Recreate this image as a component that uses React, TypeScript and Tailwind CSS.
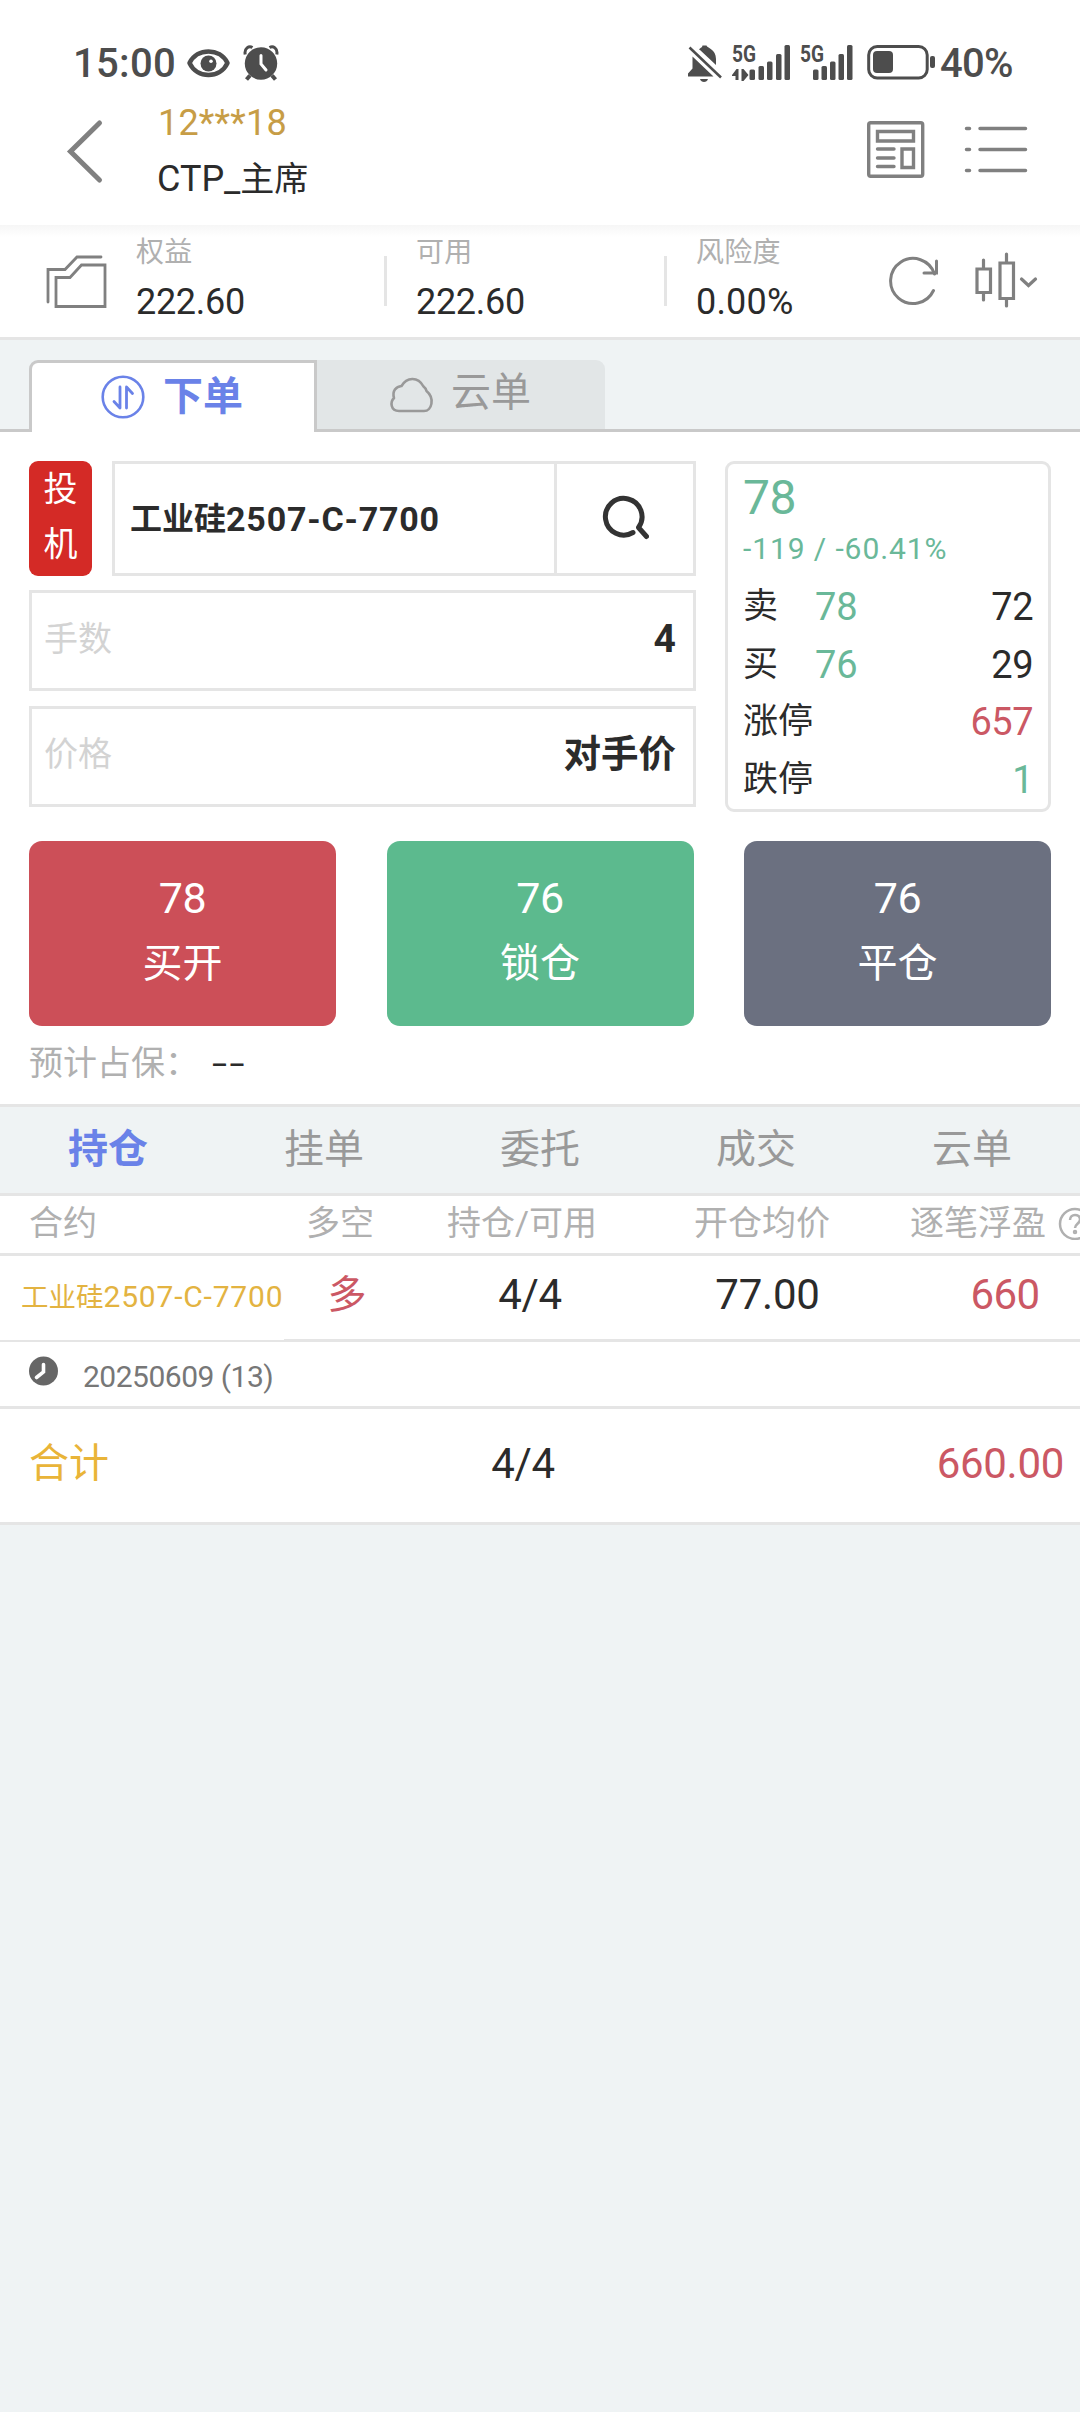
import { useState } from "react";

const orderButtons = [
  { price: "78", label: "买开", color: "bg-[#cc4f58]" },
  { price: "76", label: "锁仓", color: "bg-[#5cba8e]" },
  { price: "76", label: "平仓", color: "bg-[#6b7080]" },
];

const listTabs = ["持仓", "挂单", "委托", "成交", "云单"];

function Signal({ data = false }: { data?: boolean }) {
  return (
    <svg className="mt-[-5px] overflow-visible" width="58" height="44" viewBox="0 -6 58 44" fill="#4d4d4d">
      <text x="0" y="18" fontFamily="Roboto, sans-serif" fontSize="23.5" fontWeight="700" textLength="24" lengthAdjust="spacingAndGlyphs">
        5G
      </text>
      {data && <path d="M0 31l4.500-6h2v11h-3v-4H0zM9.500 25h2l5 6-5 6h-2z" />}
      <rect x={data ? 17.5 : 13} y="25.500" width="5.500" height="10.500" rx="1.500" />
      <rect x={data ? 26.5 : 21.5} y="22" width="5.500" height="14" rx="1.500" />
      <rect x={data ? 35 : 30} y="17.500" width="5.500" height="18.500" rx="1.500" />
      <rect x={data ? 44 : 38.5} y="10" width="5.500" height="26" rx="1.500" />
      <rect x={data ? 52.5 : 47} y="1" width="5.500" height="35" rx="1.500" />
    </svg>
  );
}

function StatusBar() {
  return (
    <div className="flex h-[83px] items-start pt-[43px] pl-[73px] text-[40px] leading-[42px] font-medium text-[#4d4d4d]">
      <span className="w-[114px] tracking-[0.3px]">15:00</span>
      <svg width="43" height="40" viewBox="0 0 43 40">
        <path d="M2.500 20C10 4.500 33 4.500 40.500 20 33 36 10 36 2.500 20z" fill="none" stroke="#4d4d4d" strokeWidth="4.500" strokeLinejoin="round" />
        <circle cx="21.500" cy="20.500" r="8" fill="#4d4d4d" />
        <circle cx="24" cy="18.300" r="1.800" fill="#fff" />
      </svg>
      <svg className="ml-[13px]" width="36" height="40" viewBox="0 0 36 40" fill="none" stroke="#4d4d4d">
        <circle cx="18" cy="20.500" r="16.200" fill="#4d4d4d" stroke="none" />
        <path d="M2.200 11.500C1 5 6 2.500 9.500 4.500M33.800 11.500C35 5 30 2.500 26.500 4.500" strokeWidth="3" />
        <path d="M7 32.500l-3.500 4M29 32.500l3.500 4" strokeWidth="4" />
        <path d="M18 12.500V21l5 6" stroke="#fff" strokeWidth="3" strokeLinecap="round" />
      </svg>
      <div className="ml-[409px] flex">
        <svg width="34" height="40" viewBox="0 0 34 40" fill="#4d4d4d">
          <path d="M11 6.500C13 4 14 5 14.500 2.500h4C19 5 28 6 28 16v6L12 7zM4.500 13.500L25.500 33.500H0v-3l4.500-5z" />
          <path d="M1.500 4.500L33 34.500" stroke="#4d4d4d" strokeWidth="2.500" />
          <path d="M12 36h8c-1 4-7 4-8 0z" />
        </svg>
        <span className="ml-[10px]">
          <Signal data />
        </span>
        <span className="ml-[10px]">
          <Signal />
        </span>
        <svg className="ml-[9px]" width="69" height="40" viewBox="0 0 69 40">
          <rect x="1.700" y="3.500" width="58.500" height="31.500" rx="8.500" fill="none" stroke="#4d4d4d" strokeWidth="3" />
          <rect x="6" y="8" width="20" height="22" rx="4" fill="#4d4d4d" />
          <rect x="63" y="13" width="5" height="12" rx="2" fill="#4d4d4d" />
        </svg>
        <span className="ml-[4px] tracking-[-0.7px]">40%</span>
      </div>
    </div>
  );
}

function Header() {
  return (
    <header className="h-[225px] bg-white">
      <StatusBar />
      <div className="flex">
        <svg className="mt-[36px] ml-[66px]" width="38" height="66" viewBox="0 0 38 66">
          <path d="M33.500 4L4.500 32.500l29 28.500" fill="none" stroke="#808080" strokeWidth="5" strokeLinecap="round" />
        </svg>
        <div className="ml-[54px] flex w-[709px] flex-col pt-[21px] text-[36px] leading-[38px]">
          <span className="tracking-[0.2px] text-[#c79d46]">12***18</span>
          <span className="mt-[18px] ml-[-1px] text-[#2b2b2b]">
            CTP_<span className="text-[34px]">主席</span>
          </span>
        </div>
        <svg className="mt-[38px]" width="58" height="58" viewBox="0 0 58 58" fill="none" stroke="#808080" strokeWidth="3.400">
          <rect x="1.700" y="1.700" width="54" height="53.500" rx="2" />
          <path d="M10.500 10.500h36v9.500h-36zM35 28h11.500v18.500H35z" />
          <path d="M10.500 28H27M10.500 37H27M10.500 45.500H27" strokeLinecap="round" />
        </svg>
        <svg className="mt-[42px] ml-[39px]" width="64" height="50" viewBox="0 0 64 50" fill="none" stroke="#808080" strokeWidth="3.500" strokeLinecap="round">
          <path d="M2.500 3.500h3M16 3.500H61.500M2.500 24.500h3M16 24.500H61.500M2.500 45.500h3M16 45.500H61.500" />
        </svg>
      </div>
    </header>
  );
}

function Balance({ label, value }: { label: string; value: string }) {
  return (
    <div className="flex flex-col pt-[12px]">
      <span className="text-[28px] leading-[32px] tracking-[0.3px] text-[#b0b0b0]">{label}</span>
      <span className={`mt-[14px] text-[36px] leading-[38px] text-[#2b2b2b] ${value.endsWith("%") ? "tracking-[0.2px]" : "tracking-[-0.3px]"}`}>
        {value}
      </span>
    </div>
  );
}

function AccountBar() {
  return (
    <section className="flex h-[115px] border-b-[3px] border-[#e5e5e5] bg-linear-to-b from-[#f6f6f6] to-white to-[12px]">
      <svg className="mt-[28px] ml-[45px]" width="62" height="56" viewBox="0 0 62 56" fill="none" stroke="#808080" strokeWidth="2.800">
        <path d="M3 49V16.500h17L32 4h24" strokeLinecap="round" />
        <path d="M11 53.500V24.500h14L36.500 12h23.500v41.500z" />
      </svg>
      <div className="ml-[29px] w-[248px]">
        <Balance label="权益" value="222.60" />
      </div>
      <div className="mt-[31px] h-[50px] w-[3px] bg-[#e5e5e5]" />
      <div className="ml-[29px] w-[248px]">
        <Balance label="可用" value="222.60" />
      </div>
      <div className="mt-[31px] h-[50px] w-[3px] bg-[#e5e5e5]" />
      <div className="ml-[29px] w-[191px]">
        <Balance label="风险度" value="0.00%" />
      </div>
      <svg className="mt-[30px]" width="54" height="52" viewBox="0 0 54 52" fill="none" stroke="#808080" strokeWidth="3">
        <path d="M46.500 35.500A22.500 22.500 0 1 1 47.500 19" strokeLinecap="round" />
        <path d="M49.500 6v12H37" strokeLinecap="round" />
      </svg>
      <svg className="mt-[26px] ml-[33px]" width="64" height="60" viewBox="0 0 64 60" fill="none" stroke="#808080" strokeWidth="3.200">
        <path d="M3 18h13.500v23.500H3zM9.500 18V9M9.500 41.500V49M26 12h13.500v35.500H26zM32.500 12V3M32.500 47.500V55" strokeLinecap="round" />
        <path d="M47.500 28l7 6.500 7-6.500" strokeLinecap="round" />
      </svg>
    </section>
  );
}

function OrderTabs() {
  return (
    <nav className="flex h-[92px] bg-[#eff3f4] pt-[20px]">
      <div className="w-[29px] border-b-[3px] border-[#c9c9c9]" />
      <div className="flex w-[288px] rounded-tl-[9px] border-t-[3px] border-r-[3px] border-l-[3px] border-[#c9c9c9] bg-white pl-[69px]">
        <svg className="mt-[12px]" width="44" height="44" viewBox="0 0 44 44" fill="none" stroke="#6a82e8">
          <circle cx="22" cy="22" r="20.300" strokeWidth="2.600" />
          <path d="M19 12v21l-6-6.500M25.500 33V12l6 6.500" strokeWidth="2.800" strokeLinecap="round" strokeLinejoin="round" />
        </svg>
        <span className="mt-[12px] ml-[18px] text-[40px] leading-[44px] font-bold text-[#6a82e8]">下单</span>
      </div>
      <div className="flex w-[288px] rounded-tr-[9px] border-b-[3px] border-b-[#c9c9c9] bg-[#e2e6e7] pl-[72px]">
        <svg className="mt-[15px]" width="46" height="40" viewBox="0 0 46 40" fill="none" stroke="#999" strokeWidth="2.600" strokeLinejoin="round">
          <path d="M10 36C1.500 36 1 27 5 23 3 16 7 11.500 12.500 11 17.500 2 29 1 34.500 11.500 37.500 14 37 15 37.500 16 46 23 43 36 35 36z" />
        </svg>
        <span className="mt-[11px] ml-[16px] text-[40px] leading-[44px] text-[#999]">云单</span>
      </div>
      <div className="flex-1 border-b-[3px] border-[#c9c9c9]" />
    </nav>
  );
}

function QuoteRow({ label, price, value, valueClass = "text-[#2b2b2b]" }: { label: string; price?: string; value: string; valueClass?: string }) {
  return (
    <div className="flex h-[57.700px] items-center leading-[40px]">
      <span className="w-[72px] text-[35px] whitespace-nowrap text-[#2b2b2b]">{label}</span>
      {price && <span className="text-[38px] text-[#6ab899]">{price}</span>}
      <span className={`ml-auto text-[38px] tracking-[-0.5px] ${valueClass}`}>{value}</span>
    </div>
  );
}

function OrderForm() {
  return (
    <section className="bg-white px-[29px] pt-[29px]">
      <div className="flex h-[351px]">
        <div className="flex w-[667px] flex-col">
          <div className="flex h-[115px]">
            <div className="flex w-[63px] flex-col items-center rounded-[9px] bg-[#d42a26] pt-[1px] text-[34px] leading-[55px] text-white">
              <span>投</span>
              <span>机</span>
            </div>
            <div className="ml-[20px] flex flex-1 border-[3px] border-[#e5e5e5]">
              <div className="flex flex-1 items-center pl-[15px] text-[34px] leading-[40px] font-bold text-[#2b2b2b]">
                <span className="text-[32px]">工业硅</span>
                <span className="tracking-[0.8px]">2507-C-7700</span>
              </div>
              <div className="flex w-[139px] items-center justify-center border-l-[3px] border-[#e5e5e5]">
                <svg width="48" height="48" viewBox="0 0 48 48" fill="none" stroke="#333" strokeWidth="5" strokeLinecap="round">
                  <path d="M32 37.500A18.300 18.300 0 1 1 37.500 32.500l8 9" strokeLinejoin="round" />
                </svg>
              </div>
            </div>
          </div>
          <div className="mt-[14px] flex h-[101px] items-center justify-between border-[3px] border-[#e5e5e5] pr-[17px] pb-[3px] pl-[12px]">
            <span className="text-[34px] leading-[40px] text-[#d3d3d3]">手数</span>
            <span className="text-[39px] leading-[40px] font-bold text-[#2b2b2b]">4</span>
          </div>
          <div className="mt-[15px] flex h-[101px] items-center justify-between border-[3px] border-[#e5e5e5] pr-[17px] pb-[5px] pl-[12px]">
            <span className="text-[34px] leading-[40px] text-[#d3d3d3]">价格</span>
            <span className="text-[37.500px] leading-[40px] font-bold text-[#2b2b2b]">对手价</span>
          </div>
        </div>
        <div className="ml-[29px] flex w-[326px] flex-col rounded-[9px] border-[3px] border-[#e5e5e5] px-[15px]">
          <span className="pt-[9px] text-[48px] leading-[50px] tracking-[-0.5px] text-[#6ab899]">78</span>
          <span className="mt-[10px] mb-[13px] text-[30px] leading-[32px] tracking-[0.900px] text-[#6ab899]">-119 / -60.41%</span>
          <QuoteRow label="卖" price="78" value="72" />
          <QuoteRow label="买" price="76" value="29" />
          <QuoteRow label="涨停" value="657" valueClass="text-[#cb5864]" />
          <QuoteRow label="跌停" value="1" valueClass="text-[#6ab899]" />
        </div>
      </div>
      <div className="mt-[29px] flex justify-between text-white">
        {orderButtons.map((button) => (
          <button key={button.label} className={`flex h-[185px] w-[307px] flex-col items-center rounded-[13px] pt-[35px] ${button.color}`}>
            <span className="text-[43px] leading-[44px] tracking-[-0.5px]">{button.price}</span>
            <span className="mt-[22px] text-[40px] leading-[44px]">{button.label}</span>
          </button>
        ))}
      </div>
      <div className="flex h-[78px] pt-[17px] text-[34px] leading-[40px]">
        <span className="w-[183px] text-[#b0b0b0]">预计占保：</span>
        <span className="origin-left scale-x-[1.6] tracking-[1.5px] text-[#2b2b2b]">--</span>
      </div>
    </section>
  );
}

function Positions() {
  return (
    <section className="bg-white text-[42px] leading-[44px] whitespace-nowrap text-[#2b2b2b]">
      <div className="grid h-[60px] grid-cols-[280px_120px_244px_236px_200px] items-center overflow-hidden border-b-[3px] border-[#e5e5e5] pb-[4px] text-center text-[34px] leading-[40px] text-[#b0b0b0]">
        <span className="pl-[29px] text-left">合约</span>
        <span>多空</span>
        <span>持仓/可用</span>
        <span>开仓均价</span>
        <span className="flex items-center pl-[30px]">
          逐笔浮盈
          <svg className="ml-[12px] shrink-0" width="34" height="34" viewBox="0 0 34 34" fill="none" stroke="#b0b0b0" strokeWidth="2.500">
            <circle cx="17" cy="18" r="15" />
            <path d="M12 14c0-7 10-6.500 10-.5 0 4-5 4.500-5 8.500" />
            <circle cx="17" cy="26" r="1" />
          </svg>
        </span>
      </div>
      <div className="grid h-[86px] grid-cols-[284px_126px_240px_234px_196px] text-center leading-[78px]">
        <span className="border-b-2 border-[#e5e5e5] pl-[21px] text-left text-[30px] leading-[81px] tracking-[0.800px] text-[#e3b341]">
          <span className="text-[27.500px] tracking-normal">工业硅</span>2507-C-7700
        </span>
        <span className="border-b-[3px] border-[#e5e5e5] text-[39px] text-[#cb5864]">多</span>
        <span className="border-b-[3px] border-[#e5e5e5] tracking-[-0.4px]">4/4</span>
        <span className="border-b-[3px] border-[#e5e5e5] pl-[1px] tracking-[-0.2px]">77.00</span>
        <span className="border-b-[3px] border-[#e5e5e5] pl-[46px] tracking-[-0.6px] text-[#cb5864]">660</span>
      </div>
      <div className="flex h-[67px] border-b-[3px] border-[#e5e5e5] pt-[14px] pl-[29px]">
        <svg width="29" height="30" viewBox="0 0 29 30">
          <circle cx="14.500" cy="15" r="14.500" fill="#666" />
          <path d="M14.500 8.500V16L7.500 21.500" fill="none" stroke="#fff" strokeWidth="3.600" strokeLinecap="round" />
        </svg>
        <span className="mt-[4px] ml-[25px] text-[30px] leading-[34px] tracking-[-0.5px] text-[#777]">20250609 (13)</span>
      </div>
      <div className="grid h-[116px] grid-cols-[280px_120px_246px_234px_200px] items-center border-b-[3px] border-[#e5e5e5] pb-[4px] text-center">
        <span className="pl-[29px] text-left text-[40px] text-[#e9b438]">合计</span>
        <span />
        <span className="tracking-[-0.4px]">4/4</span>
        <span />
        <span className="pr-[16px] text-right tracking-[-0.3px] text-[#cb5864]">660.00</span>
      </div>
    </section>
  );
}

export default function App() {
  const [active, setActive] = useState(0);

  return (
    <main className="min-h-[2412px] w-[1080px] overflow-hidden bg-[#eff3f4] font-[Roboto,'Noto_Sans_CJK_SC',sans-serif]">
      <Header />
      <AccountBar />
      <OrderTabs />
      <OrderForm />
      <nav className="grid h-[92px] grid-cols-5 border-y-[3px] border-[#e5e5e5] text-center text-[40px] leading-[84px]">
        {listTabs.map((tab, i) => (
          <button key={tab} onClick={() => setActive(i)} className={i === active ? "font-bold text-[#6a82e8]" : "text-[#999]"}>
            {tab}
          </button>
        ))}
      </nav>
      <Positions />
    </main>
  );
}
